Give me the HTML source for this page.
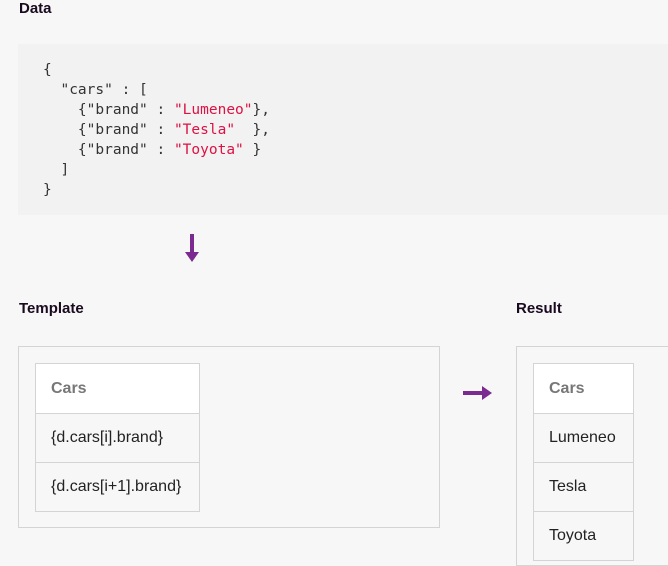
<!DOCTYPE html>
<html><head><style>
body{margin:0;width:668px;height:548px;background:#f7f7f7;overflow:hidden;position:relative;font-family:"Liberation Sans",sans-serif;}
.h{position:absolute;font-weight:bold;font-size:15px;color:#1a0a1f;}
pre{position:absolute;left:18px;top:44px;width:660px;height:171px;margin:0;background:#f2f2f2;font-family:"DejaVu Sans Mono","Liberation Mono",monospace;font-size:14.5px;line-height:20px;color:#333;padding:16px 0 0 25px;box-sizing:border-box;}
.s{color:#dd1144}
.box{position:absolute;border:1px solid #d4d4d4;box-sizing:border-box;}
table{position:absolute;border-collapse:collapse;font-size:16px;color:#222;}
td{border:1px solid #d4d4d4;height:49px;padding:0 0 0 15px;box-sizing:border-box;}
th{border:1px solid #d4d4d4;height:49px;text-align:left;padding:0 0 0 15px;background:#fff;color:#777;font-size:16px;}
</style></head><body>
<div class="h" style="left:19px;top:0px">Data</div>
<pre>{
  "cars" : [
    {"brand" : <span class="s">"Lumeneo"</span>},
    {"brand" : <span class="s">"Tesla"</span>  },
    {"brand" : <span class="s">"Toyota"</span> }
  ]
}</pre>
<svg style="position:absolute;left:184px;top:234px" width="16" height="30"><rect x="6" y="0" width="4" height="20" fill="#7b2a8f"/><path d="M1 18 L15 18 L8 28 Z" fill="#7b2a8f"/></svg>
<div class="h" style="left:19px;top:300px">Template</div>
<div class="h" style="left:516px;top:300px">Result</div>
<div class="box" style="left:18px;top:346px;width:422px;height:182px"></div>
<table style="left:35px;top:363px;width:165px">
<tr><th>Cars</th></tr><tr><td>{d.cars[i].brand}</td></tr><tr><td>{d.cars[i+1].brand}</td></tr></table>
<svg style="position:absolute;left:463px;top:385px" width="30" height="16"><rect x="0" y="6" width="20" height="4" fill="#7b2a8f"/><path d="M19 1 L19 15 L29 8 Z" fill="#7b2a8f"/></svg>
<div class="box" style="left:516px;top:346px;width:200px;height:220px"></div>
<table style="left:533px;top:363px;width:101px">
<tr><th>Cars</th></tr><tr><td>Lumeneo</td></tr><tr><td>Tesla</td></tr><tr><td>Toyota</td></tr></table>
</body></html>
